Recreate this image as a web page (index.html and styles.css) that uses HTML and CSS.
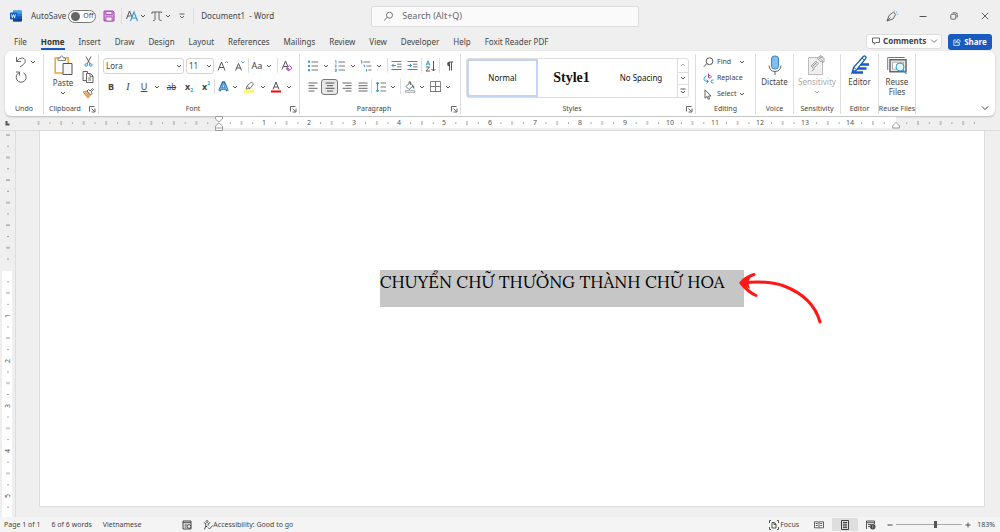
FILE: index.html
```html
<!DOCTYPE html>
<html lang="vi">
<head>
<meta charset="utf-8">
<title>Document1 - Word</title>
<link rel="stylesheet" href="styles.css">
</head>
<body>
<svg class="defs" aria-hidden="true">
  <symbol id="chev" viewBox="0 0 6 6"><path d="M1 2l2 2 2-2" fill="none" stroke="currentColor" stroke-width=".9"/></symbol>
  <symbol id="launch" viewBox="0 0 7 7"><path d="M.5 5.500V.5h5M2.500 2.500l3 3M6 2.500v3.500h-3.500" fill="none" stroke="#555" stroke-width=".9"/></symbol>
</svg>

<header class="titlebar">
  <div class="title-left">
    <svg class="word-logo" width="12" height="12" viewBox="0 0 12 12"><rect x="3" y=".5" width="9" height="11" rx="1" fill="#2b7cd3"/><path d="M3 .5h8a1 1 0 0 1 1 1v2H3z" fill="#41a5ee"/><path d="M3 6h9v2.500H3z" fill="#185abd"/><path d="M3 8.500h9v2a1 1 0 0 1-1 1H3z" fill="#103f91"/><rect y="2.500" width="7" height="7" rx=".7" fill="#185abd"/><path d="M1.500 4.300l.9 3.500 1.100-3.300 1.100 3.300.9-3.500" fill="none" stroke="#fff" stroke-width=".8"/></svg>
    <label class="autosave">AutoSave <span class="switch"><input type="checkbox"><span>Off</span></span></label>
    <button class="tool save" aria-label="Save"><svg width="12" height="12" viewBox="0 0 12 12"><path d="M1 1h9l1 1v9H1z" fill="#d99be0" stroke="#a43fb1"/><path d="M3 1.500h6v3H3z" fill="#f6e6f8" stroke="#a43fb1" stroke-width=".8"/><path d="M3 7h6v4H3z" fill="#fff" stroke="#a43fb1" stroke-width=".8"/></svg></button>
    <button class="tool ruled" aria-label="Text tools"><svg width="12" height="12" viewBox="0 0 12 12"><path d="M.5 9L3.500 1l2.500 6M1.500 6h3" fill="none" stroke="#555"/><path d="M4.500 11L8 2l3.500 9M5.800 8h4.400" fill="none" stroke="#2f9ad6" stroke-width="1.100"/></svg><svg class="chev"><use href="#chev"/></svg></button>
    <button class="tool equation" aria-label="Equation"><svg width="12" height="12" viewBox="0 0 12 12"><path d="M1 4V2h9.500v1M4 2v7.500q0 1-2 1M8 2v7.500q0 1 2.500 1" fill="none" stroke="#555" stroke-width=".9"/></svg><svg class="chev"><use href="#chev"/></svg></button>
    <button class="tool customize" aria-label="Customize toolbar"><svg width="6" height="6" viewBox="0 0 6 6"><path d="M.5 1h5M1 3l2 2 2-2" fill="none" stroke="#555" stroke-width=".9"/></svg></button>
    <span class="doc-name">Document1&nbsp; - Word</span>
  </div>
  <label class="search">
    <svg width="11" height="11" viewBox="0 0 11 11"><circle cx="6.500" cy="4.200" r="3" fill="none" stroke="#666" stroke-width=".9"/><path d="M4.300 6.300L1 9.500" stroke="#666" stroke-width=".9"/></svg>
    <input type="text" placeholder="Search (Alt+Q)" aria-label="Search">
  </label>
  <div class="title-right">
    <button aria-label="Pen"><svg width="12" height="12" viewBox="0 0 12 12"><path d="M1 11L3 5.500 7.500 2 9.500 4.500 7 9 1 11 4.500 7.500" fill="none" stroke="#555" stroke-width=".9"/><path d="M8.500 1.500l.3-1M10 2.500l1.200-1M10.800 4.200l1 .2" stroke="#2f9ad6" stroke-width=".8"/></svg></button>
    <button aria-label="Minimize"><svg width="8" height="8" viewBox="0 0 8 8"><path d="M.5 4.500h7" stroke="#555"/></svg></button>
    <button aria-label="Restore"><svg width="8" height="8" viewBox="0 0 8 8"><rect x=".8" y="2.200" width="5" height="5" rx="1" fill="none" stroke="#555" stroke-width=".9"/><path d="M2.500.8h3.200q1.500 0 1.500 1.500V5.500" fill="none" stroke="#555" stroke-width=".9"/></svg></button>
    <button aria-label="Close"><svg width="8" height="8" viewBox="0 0 8 8"><path d="M.8.8l6.400 6.400M7.200.8L.8 7.200" stroke="#555" stroke-width=".9"/></svg></button>
  </div>
</header>

<nav class="tabs">
  <a href="#">File</a><a href="#" class="active">Home</a><a href="#">Insert</a><a href="#">Draw</a><a href="#">Design</a><a href="#">Layout</a><a href="#">References</a><a href="#">Mailings</a><a href="#">Review</a><a href="#">View</a><a href="#">Developer</a><a href="#">Help</a><a href="#">Foxit Reader PDF</a>
  <div class="tab-actions">
    <button class="comments"><svg width="8" height="8" viewBox="0 0 8 8"><path d="M.5 1h7v4.500H4L2.200 7.300V5.500H.5z" fill="none" stroke="#444" stroke-width=".8"/></svg>Comments<svg width="8" height="8" viewBox="0 0 8 8" class="push"><path d="M1 2.500l3 3 3-3" fill="none" stroke="#555" stroke-width=".8"/></svg></button>
    <button class="share"><svg width="8" height="8" viewBox="0 0 8 8"><path d="M3 2H.8v5.300h5.500V5M2.500 5q.3-2.500 2.500-2.500V1l2.500 2.200L5 5.200V3.800Q3.500 3.800 2.500 5z" fill="none" stroke="#fff" stroke-width=".8"/></svg>Share</button>
  </div>
</nav>

<main class="ribbon">
  <section class="group undo">
    <div class="body">
      <div class="row"><button aria-label="Undo"><svg width="12" height="12" viewBox="0 0 12 12"><path d="M1.500 1v4.500H6M1.500 5.500Q4 1.500 7.500 2T10 6.500Q9 8.500 5 11" fill="none" stroke="#666"/></svg></button><button aria-label="Undo list"><svg class="chev"><use href="#chev"/></svg></button></div>
      <div class="row"><button aria-label="Redo"><svg width="12" height="12" viewBox="0 0 12 12"><path d="M1 1h3.500v3.500M4.500 1.500A5 5 0 1 0 8.500 1.800" fill="none" stroke="#666"/></svg></button></div>
    </div>
    <h2>Undo</h2>
  </section>

  <section class="group clipboard">
    <div class="body">
      <button class="big"><svg width="19" height="21" viewBox="0 0 19 21"><rect x="1.200" y="3" width="13" height="15" fill="#fff" stroke="#eda84d" stroke-width="1.600"/><path d="M4 5.500V3h2.200Q6.500.8 7.700.8T9.300 3h2.200v2.500z" fill="#fff" stroke="#777" stroke-width=".9"/><path d="M9 8.500h9v11H9z" fill="#f7f7f7" stroke="#555"/></svg>Paste<svg class="chev"><use href="#chev"/></svg></button>
      <div class="stack">
        <button aria-label="Cut"><svg width="9" height="11" viewBox="0 0 9 11"><path d="M2 .5l4 7.500M7 .5L3 8" stroke="#555" stroke-width=".9"/><circle cx="2.200" cy="9" r="1.300" fill="none" stroke="#2f9ad6"/><circle cx="6.800" cy="9" r="1.300" fill="none" stroke="#2f9ad6"/></svg></button>
        <button aria-label="Copy"><svg width="12" height="12" viewBox="0 0 12 12"><path d="M4 9.500H1v-9h4.500V2" fill="none" stroke="#555" stroke-width=".9"/><path d="M4.500 2.500h4l2.500 2.500v6.500H4.500zM8 2.800v2.500h3M6.200 7h3M6.200 9h3" fill="#fff" stroke="#555" stroke-width=".9"/></svg></button>
        <button aria-label="Format painter"><svg width="12" height="12" viewBox="0 0 12 12"><path d="M1 5l4-1 3.500 4L6 11z" fill="#f8b878" stroke="#e8862a" stroke-width=".9"/><path d="M2 6l4.500 4M3.500 5.500L7 9" stroke="#e8862a" stroke-width=".7"/><path d="M5 4l1.500-1.500L8 4l2.500-2.500 1 1L9 5l1 1.500L8.500 8z" fill="#fff" stroke="#555" stroke-width=".9"/></svg></button>
      </div>
    </div>
    <h2>Clipboard</h2><button class="launcher" aria-label="Clipboard pane"><svg width="7" height="7"><use href="#launch"/></svg></button>
  </section>

  <section class="group font">
    <div class="body">
      <div class="row font-top">
        <span class="combo"><select aria-label="Font name"><option>Lora</option></select><svg class="chev"><use href="#chev"/></svg></span>
        <span class="combo"><select aria-label="Font size"><option>11</option></select><svg class="chev"><use href="#chev"/></svg></span>
        <button aria-label="Grow font"><svg width="12" height="12" viewBox="0 0 12 12"><path d="M1 10.500L4.500 2 8 10.500M2.200 7.500h4.600" fill="none" stroke="#555"/><path d="M8 3l1.500-1.500L11 3" fill="none" stroke="#2f9ad6" stroke-width=".9"/></svg></button>
        <button aria-label="Shrink font"><svg width="12" height="12" viewBox="0 0 12 12"><path d="M1.500 10.500L4.500 3.500l3 7M2.500 8h4" fill="none" stroke="#555"/><path d="M7.500 1.500L9 3l1.500-1.500" fill="none" stroke="#2f9ad6" stroke-width=".9"/></svg></button>
        <button class="sep glyph">Aa</button>
        <button aria-label="Change case"><svg class="chev"><use href="#chev"/></svg></button>
        <button class="sep after" aria-label="Clear formatting"><svg width="12" height="12" viewBox="0 0 12 12"><path d="M1 9.500L4.500 1 7 7M2.200 6.500h4" fill="none" stroke="#555"/><path d="M5 8.500L8.500 5.500 11 8 7.500 11z" fill="#fff" stroke="#a43fb1" stroke-width=".9"/><path d="M6.500 7.200L9 9.800 7.500 11 5 8.500z" fill="#b85cc4"/></svg></button>
      </div>
      <div class="row font-bottom">
        <button class="glyph bold">B</button>
        <button class="glyph italic">I</button>
        <button class="glyph underline">U</button>
        <button aria-label="Underline style"><svg class="chev"><use href="#chev"/></svg></button>
        <button class="glyph strike">ab</button>
        <button class="glyph bold">x<sub>2</sub></button>
        <button class="glyph bold">x<sup>2</sup></button>
        <button class="sep" aria-label="Text effects"><svg width="11" height="11" viewBox="0 0 11 11"><path d="M1.500 10L5 1.500h1L9.500 10M3 7.500h5" fill="none" stroke="#1f6fb5" stroke-width="2.600"/><path d="M1.500 9.500L5.500 2l4 7.500M3.200 7.300h4.600" fill="none" stroke="#a8d4f5" stroke-width=".8"/></svg></button>
        <button aria-label="Text effects list"><svg class="chev"><use href="#chev"/></svg></button>
        <button aria-label="Highlight"><svg width="12" height="12" viewBox="0 0 12 12"><path d="M3 8l1-3 4.500-4 2 2L7 7.500 3 8zM4.200 5L7 7.500" fill="#fff" stroke="#666" stroke-width=".9"/><path d="M1 9.500h10v2H1z" fill="#ff0"/></svg></button>
        <button aria-label="Highlight colours"><svg class="chev"><use href="#chev"/></svg></button>
        <button aria-label="Font colour"><svg width="12" height="12" viewBox="0 0 12 12"><path d="M3 8.500L6 1l3 7.500M4 6h4" fill="none" stroke="#555"/><path d="M1 9.500h10v2H1z" fill="#f00"/></svg></button>
        <button aria-label="Font colours"><svg class="chev"><use href="#chev"/></svg></button>
      </div>
    </div>
    <h2>Font</h2><button class="launcher" aria-label="Font settings"><svg width="7" height="7"><use href="#launch"/></svg></button>
  </section>

  <section class="group paragraph">
    <div class="body">
      <div class="row para-top">
        <button aria-label="Bullets"><svg width="12" height="12" viewBox="0 0 12 12"><path d="M1 1.800h2M1 6h2M1 10.200h2" stroke="#2f9ad6" stroke-width="2"/><path d="M4.500 2H11M4.500 6H11M4.500 10H11" stroke="#777"/></svg></button>
        <button aria-label="Bullet styles"><svg class="chev"><use href="#chev"/></svg></button>
        <button aria-label="Numbering"><svg width="12" height="12" viewBox="0 0 12 12"><path d="M1 1l1-.3v3M.8 5h1.700L1 7h1.500M.8 9h1.500v2.500H.8M1 10.200h1.200" fill="none" stroke="#2f9ad6" stroke-width=".8"/><path d="M4.500 2H11M4.500 6H11M4.500 10H11" stroke="#777"/></svg></button>
        <button aria-label="Number styles"><svg class="chev"><use href="#chev"/></svg></button>
        <button aria-label="Multilevel list"><svg width="12" height="12" viewBox="0 0 12 12"><path d="M.8 1l1-.3v3M3.500 5.300h1.200v2M6.500 9v2.500" fill="none" stroke="#2f9ad6"/><path d="M3.500 2H10M6.500 6H11.500M8.500 10h3" stroke="#777"/></svg></button>
        <button aria-label="List styles"><svg class="chev"><use href="#chev"/></svg></button>
        <button class="sep after" aria-label="Decrease indent"><svg width="11" height="11" viewBox="0 0 11 11"><path d="M.5 1.500h10M6 4.200h4.500M6 6.800h4.500M.5 9.500h10" stroke="#777"/><path d="M5 5.500H1M2.700 3.800L1 5.500l1.700 1.700" fill="none" stroke="#2f9ad6"/></svg></button>
        <button aria-label="Increase indent"><svg width="11" height="11" viewBox="0 0 11 11"><path d="M.5 1.500h10M6 4.200h4.500M6 6.800h4.500M.5 9.500h10" stroke="#777"/><path d="M.5 5.500h4M2.800 3.800l1.700 1.700-1.700 1.700" fill="none" stroke="#2f9ad6"/></svg></button>
        <button class="sep" aria-label="Sort"><svg width="12" height="12" viewBox="0 0 12 12"><path d="M1 5.500L3 .8l2 4.700M1.800 4h2.500" fill="none" stroke="#2f9ad6"/><path d="M1 7h3.500L1 11h4M8.500 1v10M6.500 9l2 2 2-2" fill="none" stroke="#555"/></svg></button>
        <button class="sep" aria-label="Show marks"><svg width="8" height="10" viewBox="0 0 8 10"><path d="M4.500 5.500a2.300 2.300 0 0 1 0-4.800z" fill="#555"/><path d="M4.500 9.500V1M6.500 9.500V1M4 1h4" fill="none" stroke="#555"/></svg></button>
      </div>
      <div class="row para-bottom">
        <button aria-label="Align left"><svg width="10" height="10" viewBox="0 0 10 10"><path d="M.5 1h9M.5 3.700h6M.5 6.300h9M.5 9h6" stroke="#666"/></svg></button>
        <button class="pressed" aria-label="Centre"><svg width="10" height="10" viewBox="0 0 10 10"><path d="M.5 1h9M2 3.700h6M.5 6.300h9M2 9h6" stroke="#555"/></svg></button>
        <button aria-label="Align right"><svg width="10" height="10" viewBox="0 0 10 10"><path d="M.5 1h9M3.500 3.700h6M.5 6.300h9M3.500 9h6" stroke="#666"/></svg></button>
        <button aria-label="Justify"><svg width="10" height="10" viewBox="0 0 10 10"><path d="M.5 1h9M.5 3.700h9M.5 6.300h9M.5 9h9" stroke="#666"/></svg></button>
        <button class="sep" aria-label="Line spacing"><svg width="12" height="12" viewBox="0 0 12 12"><path d="M2.500 1v10M1 3l1.500-2L4 3M1 9l1.500 2L4 9" fill="none" stroke="#2f9ad6"/><path d="M5.500 2H11M5.500 6H11M5.500 10H11" stroke="#777"/></svg></button>
        <button aria-label="Line spacing list"><svg class="chev"><use href="#chev"/></svg></button>
        <button class="sep after" aria-label="Shading"><svg width="12" height="12" viewBox="0 0 12 12"><path d="M2 5.500L6 1.500 9 5 5 8.500zM5 2.500V.8h1.500V4" fill="#fff" stroke="#666" stroke-width=".9"/><path d="M8 3.500q2.500 1 2.500 4Q8.500 8 8 3.500z" fill="#2f7fc0"/><path d="M1.500 9.700h9.500v1.600H1.500z" fill="#fff" stroke="#888" stroke-width=".7"/></svg></button>
        <button aria-label="Shading colours"><svg class="chev"><use href="#chev"/></svg></button>
        <button aria-label="Borders"><svg width="11" height="11" viewBox="0 0 11 11"><path d="M.5.5h10v10H.500z" fill="none" stroke="#888"/><path d="M5.500 0v11M0 5.500h11M0 10.500h11" stroke="#777"/></svg></button>
        <button aria-label="Border styles"><svg class="chev"><use href="#chev"/></svg></button>
      </div>
    </div>
    <h2>Paragraph</h2><button class="launcher" aria-label="Paragraph settings"><svg width="7" height="7"><use href="#launch"/></svg></button>
  </section>

  <section class="group styles">
    <div class="body">
      <div class="gallery">
        <button class="style selected">Normal</button>
        <button class="style heading">Style1</button>
        <button class="style">No Spacing</button>
        <div class="scroller">
          <button class="dim" aria-label="Previous"><svg width="6" height="6" viewBox="0 0 6 6"><path d="M1 4l2-2 2 2" fill="none" stroke="currentColor" stroke-width=".9"/></svg></button>
          <button aria-label="Next"><svg class="chev"><use href="#chev"/></svg></button>
          <button aria-label="More styles"><svg width="6" height="6" viewBox="0 0 6 6"><path d="M.5 1h5M1 3l2 2 2-2" fill="none" stroke="#444" stroke-width=".9"/></svg></button>
        </div>
      </div>
    </div>
    <h2>Styles</h2><button class="launcher" aria-label="Styles pane"><svg width="7" height="7"><use href="#launch"/></svg></button>
  </section>

  <section class="group editing">
    <div class="body">
      <button><svg width="11" height="11" viewBox="0 0 11 11"><circle cx="6.500" cy="4.200" r="3.400" fill="none" stroke="#555"/><path d="M4 6.500L.8 9.800" stroke="#555"/></svg>Find<svg class="chev far"><use href="#chev"/></svg></button>
      <button><svg width="11" height="11" viewBox="0 0 11 11"><path d="M5.500.5v4M5.500 3.500a1.300 1.300 0 1 1 0 .4" fill="none" stroke="#a43fb1"/><path d="M3.500 3Q.8 3.500 1 6.500q.5 2 4 2M3.500 6.800l2 1.700-2 1.800M10.500 7q-2.500-.5-2.500 1.500t2.500 1.500" fill="none" stroke="#2f9ad6"/></svg>Replace</button>
      <button><svg width="11" height="11" viewBox="0 0 11 11"><path d="M2 .8v8.400l2-1.800 1.300 3L6.700 9.800 5.400 7H8z" fill="#fff" stroke="#555" stroke-width=".9"/></svg>Select<svg class="chev"><use href="#chev"/></svg></button>
    </div>
    <h2>Editing</h2>
  </section>

  <section class="group voice">
    <div class="body">
      <button class="big"><svg width="14" height="20" viewBox="0 0 14 20"><rect x="3.500" y="1" width="7" height="13" rx="3" fill="#83bdec" stroke="#3a86c4"/><path d="M1 10.500q.5 6 6 6t6-6M7 16.500V20" fill="none" stroke="#666"/></svg>Dictate</button>
    </div>
    <h2>Voice</h2>
  </section>

  <section class="group sensitivity">
    <div class="body">
      <button class="big dim" disabled><svg width="18" height="20" viewBox="0 0 18 20"><path d="M.5 2.500h14v17H.5z" fill="#efefef" stroke="#bbb"/><path d="M3 11l5-5 2.500 2.500-5 5zM9 3l4-2.500L16.500 4 13 7z" fill="#ddd" stroke="#aaa"/><path d="M4.500 11.500L8.500 7.500M11 3.500l4-2M14 8l3-2.500M3.500 16l3-2" stroke="#999"/></svg>Sensitivity<svg class="chev"><use href="#chev"/></svg></button>
    </div>
    <h2>Sensitivity</h2>
  </section>

  <section class="group editor">
    <div class="body">
      <button class="big"><svg width="20" height="20" viewBox="0 0 20 20"><path d="M9 9.500h10M7 13.500h9.500M3 17.500h10" stroke="#185abd" stroke-width="2.400"/><path d="M2 18l1.500-5.500L13.500 1.300q1-.8 2 .1t.3 2L6.500 15z" fill="#fff" stroke="#185abd" stroke-width="1.300"/><path d="M12 3l2.300 2M4 12.500l2.500 2.200M2.500 18l.8-3 1.700 1.500z" fill="none" stroke="#185abd"/></svg>Editor</button>
    </div>
    <h2>Editor</h2>
  </section>

  <section class="group reuse">
    <div class="body">
      <button class="big"><svg width="20" height="20" viewBox="0 0 20 20"><path d="M.7 15V2.500h17" fill="none" stroke="#777"/><path d="M3 4.700h16v12H3z" fill="#eee" stroke="#666" stroke-width="1.500"/><path d="M5.500 7.200h11v7h-11z" fill="#fff" stroke="#999" stroke-width=".8"/><circle cx="13" cy="12" r="4" fill="#e8f4fc" stroke="#2f9ad6"/><path d="M16 15l3.500 3.800" stroke="#2f9ad6" stroke-width="1.200"/></svg><span>Reuse<br>Files</span></button>
    </div>
    <h2>Reuse Files</h2>
  </section>
  <button class="collapse" aria-label="Collapse ribbon"><svg width="8" height="8" viewBox="0 0 8 8"><path d="M1 2.500l3 3 3-3" fill="none" stroke="#444"/></svg></button>
</main>

<div class="ruler">
  <svg class="h-ruler" height="16" aria-hidden="true">
    <defs>
      <pattern id="hp" x="219" y="0" width="45.100" height="16" patternUnits="userSpaceOnUse"><path d="M11.300 6v2M33.800 6v2" stroke="#aaa"/><path d="M22.500 5v4" stroke="#999"/></pattern>
      <pattern id="hm" x="216" y="0" width="22.550" height="16" patternUnits="userSpaceOnUse"><path d="M3 5v4" stroke="#999"/><path d="M14.300 6v2" stroke="#aaa"/></pattern>
    </defs>
    <rect x="36" width="180" height="16" fill="url(#hm)"/>
    <rect x="219" y="1" width="677" height="11" fill="#fff"/>
    <rect x="219" width="677" height="16" fill="url(#hp)"/>
    <rect x="902" width="77" height="16" fill="url(#hm)"/>
    <path d="M6.500 5v3.500h3" stroke="#555" stroke-width="2" fill="none"/>
    <g class="nums">
      <text x="264" y="9">1</text><text x="309" y="9">2</text><text x="354" y="9">3</text><text x="399" y="9">4</text><text x="444" y="9">5</text><text x="490" y="9">6</text><text x="535" y="9">7</text><text x="580" y="9">8</text><text x="625" y="9">9</text><text x="670" y="9">10</text><text x="715" y="9">11</text><text x="760" y="9">12</text><text x="805" y="9">13</text><text x="850" y="9">14</text>
    </g>
    <path d="M215.500.5h7v2.500l-3.500 3-3.500-3zM215.500 14.500V10l3.500-3 3.500 3v4.500zM215.500 12h7M892.500 12V10L896 6.500l3.500 3.500v2z" fill="#fff" stroke="#888" stroke-width=".8"/>
  </svg>
</div>

<div class="workspace">
  <svg class="v-ruler" width="15" height="386" aria-hidden="true">
    <defs>
      <pattern id="vp" x="0" y="139.500" width="15" height="45.100" patternUnits="userSpaceOnUse"><path d="M7 11.300h2M7 33.800h2" stroke="#aaa"/><path d="M6 22.500h4" stroke="#999"/></pattern>
      <pattern id="vm" x="0" y="1" width="15" height="22.550" patternUnits="userSpaceOnUse"><path d="M6 3h4" stroke="#888"/><path d="M7 14.300h2" stroke="#999"/></pattern>
    </defs>
    <rect y="1" width="15" height="134" fill="url(#vm)"/>
    <rect x="2" y="140" width="10" height="246" fill="#fff"/>
    <rect y="140" width="15" height="246" fill="url(#vp)"/>
    <g class="nums">
      <text transform="translate(10 185) rotate(-90)">1</text><text transform="translate(10 230) rotate(-90)">2</text><text transform="translate(10 275) rotate(-90)">3</text><text transform="translate(10 320) rotate(-90)">4</text><text transform="translate(10 365) rotate(-90)">5</text>
    </g>
  </svg>
  <article class="paper">
    <p class="selection">CHUYỂN CHỮ THƯỜNG THÀNH CHỮ HOA
      <svg class="arrow" width="88" height="56" viewBox="0 0 88 56" aria-hidden="true"><path d="M16 4.500Q7 7.500 3 13Q10 22 18 25.500M4 13Q30 10 46 16Q75 27 82 52" fill="none" stroke="#ff1616" stroke-width="3" stroke-linecap="round" stroke-linejoin="round"/><path d="M1 12.500L13 7l-3 5 2 7z" fill="#ff1616"/></svg>
    </p>
  </article>
</div>

<footer class="status">
  <span>Page 1 of 1</span><span>6 of 6 words</span><span class="lang">Vietnamese</span>
  <button aria-label="Macro recording"><svg width="10" height="10" viewBox="0 0 10 10"><path d="M1 1h8v8H1zM1 2.700h8M2.500 5h3M2.500 7h2" fill="none" stroke="#444"/><circle cx="7" cy="6.500" r="1.800" fill="#fff" stroke="#444"/></svg></button>
  <button class="access"><svg width="10" height="10" viewBox="0 0 10 10"><circle cx="4" cy="1.500" r="1" fill="none" stroke="#444" stroke-width=".8"/><path d="M.8 2.500l2 1.200V6L1.500 9.500M7.200 2.500l-2 1.200V5.500M2.800 6.500h1.500M5 7.500l1.500 1.500 3-3.500" fill="none" stroke="#444" stroke-width=".9"/></svg>Accessibility: Good to go</button>
  <div class="views">
    <button class="focus"><svg width="10" height="10" viewBox="0 0 10 10"><path d="M2 .5H.5V3M8 .5h1.500V3M2 9.500H.5V7M8 9.500h1.500V7M3 2.500h2.500L7 4v4H3zM5 2.500V4.500h2" fill="none" stroke="#444" stroke-width=".9"/></svg>Focus</button>
    <button class="view" aria-label="Read mode"><svg width="10" height="8" viewBox="0 0 10 8"><path d="M.5.8h4l.5.5.5-.5h4v6h-4l-.5.5-.5-.5h-4zM5 1v6M1.800 2.500h2M1.800 4.500h2M6.200 2.500h2M6.200 4.500h2" fill="none" stroke="#555" stroke-width=".9"/></svg></button>
    <button class="view current" aria-label="Print layout"><svg width="8" height="10" viewBox="0 0 8 10"><path d="M.5.5h7v9h-7zM2 2.500h4M2 4.200h4M2 5.900h4M2 7.600h4" fill="none" stroke="#444"/></svg></button>
    <button class="view" aria-label="Web layout"><svg width="10" height="10" viewBox="0 0 10 10"><path d="M.5 9V1h8v3M.5 2.700h8M2 4.500h3M2 6.500h2" fill="none" stroke="#555"/><circle cx="6.800" cy="6.800" r="2.700" fill="#444"/><path d="M6.800 5v3.500" stroke="#ccc" stroke-width=".7"/></svg></button>
    <button class="step" aria-label="Zoom out"><svg width="6" height="6" viewBox="0 0 6 6"><path d="M.5 3h5" stroke="#444"/></svg></button>
    <input class="zoom" type="range" min="0" max="100" value="60" aria-label="Zoom">
    <button class="step" aria-label="Zoom in"><svg width="6" height="6" viewBox="0 0 6 6"><path d="M.5 3h5M3 .5v5" stroke="#444" stroke-width=".9"/></svg></button>
    <span class="percent">183%</span>
  </div>
</footer>
</body>
</html>
```
FILE: styles.css
```css
* { box-sizing: border-box; }
body {
  margin: 0;
  height: 100vh;
  display: flex;
  flex-direction: column;
  overflow: hidden;
  background: #efefef;
  color: #444;
  font: 8px/10px "Noto Sans", "Open Sans", sans-serif;
}
button, input, select { font: inherit; color: inherit; margin: 0; }
button {
  border: 0;
  padding: 0;
  background: none;
  display: flex;
  align-items: center;
  justify-content: center;
}
svg { display: block; flex: none; }
.defs { position: absolute; width: 0; height: 0; }
.chev { width: 6px; height: 6px; }

/* title bar */
.titlebar {
  display: grid;
  grid-template-columns: 1fr 27% 1fr;
  align-items: center;
  padding-left: 10px;
  height: 32px;
}
.title-left { display: flex; align-items: center; }
.word-logo { margin-right: 9px; }
.autosave { display: flex; align-items: center; gap: 2px; }
.switch {
  display: flex;
  align-items: center;
  gap: 3px;
  width: 28px;
  height: 13px;
  padding-left: 2px;
  border: 1px solid #777;
  border-radius: 7px;
  background: #fff;
  font-size: 7px;
}
.switch input {
  appearance: none;
  width: 9px;
  height: 9px;
  border-radius: 50%;
  background: #666;
}
.tool { gap: 2px; height: 16px; padding: 0 4px; }
.tool.save { padding: 0 6px 0 7px; }
.tool.ruled { border-left: 1px solid #ddd; }
.tool.equation { padding-left: 1px; }
.tool.customize { padding: 0 8px 0 4px; border-right: 1px solid #ddd; }
.doc-name { padding-left: 7px; white-space: nowrap; }
.search {
  display: flex;
  align-items: center;
  gap: 8px;
  height: 21px;
  padding-left: 11px;
  border: 1px solid #dcdcdc;
  border-radius: 2px;
  background: #fafafa;
}
.search input {
  flex: 1;
  min-width: 0;
  border: 0;
  padding: 0;
  background: none;
  outline: 0;
  font-size: 9px;
}
.search input::placeholder { color: #666; }
.title-right { display: flex; justify-content: flex-end; }
.title-right button { width: 31px; height: 20px; }

/* tabs */
.tabs { display: flex; align-items: center; height: 19px; padding: 0 8px 0 14px; gap: 14px; }
.tabs a { color: #444; text-decoration: none; white-space: nowrap; height: 17px; line-height: 18px; }
.tabs a.active { font-weight: 700; border-bottom: 2px solid #185abd; color: #333; }
.tab-actions { display: flex; gap: 6px; margin-left: auto; font-weight: 700; }
.comments { gap: 3px; width: 76px; height: 15px; padding: 0 3px 0 5px; border: 1px solid #ddd; border-radius: 3px; background: #fff; font-weight: 700; }
.push { margin-left: auto; }
.share { gap: 3px; width: 44px; height: 16px; border-radius: 3px; background: #185abd; color: #fff; font-weight: 700; }

/* ribbon */
.ribbon {
  display: flex;
  margin: 0 5px;
  padding: 3px 0 2px;
  height: 65px;
  border-radius: 6px;
  background: #fff;
  box-shadow: 0 1px 2px #b8b8b8;
}
.group {
  display: grid;
  grid-template-columns: 1fr auto;
  grid-template-rows: 1fr 10px;
  border-right: 1px solid #ddd;
  flex: none;
}
.group .body { grid-column: 1 / -1; min-width: 0; min-height: 0; }
.group h2 {
  margin: 0;
  font-size: 7px;
  line-height: 10px;
  font-weight: 400;
  text-align: center;
  white-space: nowrap;
  justify-self: center;
}
.launcher { width: 12px; }
.row { display: grid; align-items: center; height: 17px; }
.sep { border-left: 1px solid #ddd; height: 15px; }
.after { margin-left: 4px; }
.glyph { font-size: 9px; line-height: 12px; }
.bold { font-weight: 700; }
.italic { font-style: italic; font-family: "Liberation Serif", serif; font-size: 10px; }
.underline { text-decoration: underline; }
.strike { text-decoration: line-through; font-size: 8px; }
.glyph sub, .glyph sup { font-size: 5px; line-height: 5px; color: #2f9ad6; }
.glyph sub { align-self: flex-end; }
.glyph sup { align-self: flex-start; }
.big { flex-direction: column; justify-content: flex-start; gap: 2px; width: 100%; line-height: 10px; }
.dim { color: #aaa; }

.undo { width: 39px; }
.undo .row { grid-template-columns: 16px 8px; height: 15px; padding-left: 8px; justify-content: start; }
.clipboard { width: 55px; }
.clipboard .body { display: grid; grid-template-columns: 38px 10px; padding-top: 1px; }
.stack { display: grid; grid-template-rows: 13px 18px 14px; justify-items: center; }
.font { width: 201px; }
.font .body, .paragraph .body { display: grid; align-content: start; gap: 4px; padding: 3px 0 0 4px; }
.font-top { grid-template-columns: 83px 28px 18px 16px 17px 8px 22px; }
.font-bottom { grid-template-columns: 16px 18px 14px 12px 17px 18px 16px 17px 8px 20px 8px 18px 8px; }
.combo {
  display: flex;
  align-items: center;
  height: 16px;
  padding: 0 1px 0 2px;
  border: 1px solid #d4d4d4;
  border-radius: 3px;
}
.combo:first-child { margin-right: 2px; }
.combo select { appearance: none; flex: 1; min-width: 0; border: 0; padding: 0; background: none; }
.paragraph { width: 161px; }
.para-top { grid-template-columns: 18px 8px 19px 7px 19px 8px 21px 17px 18px 18px; }
.para-bottom { grid-template-columns: 17px 17px 17px 16px 18px 7px 22px 8px 18px 8px; }
.font-top, .font-bottom, .para-top, .para-bottom { justify-content: start; }
.pressed { height: 16px; border: 1px solid #777; border-radius: 3px; background: #e8e8e8; }
.styles { width: 235px; }
.styles .body { padding: 4px 6px 0 5px; }
.gallery { display: grid; grid-template-columns: 71px 67px 1fr 11px; height: 40px; border: 1px solid #ddd; border-radius: 3px; }
.style { color: #111; white-space: nowrap; }
.selected { border: 2px solid #c3d5f2; height: 38px; }
.heading { font: 700 14px/18px "Liberation Serif", serif; }
.scroller { display: grid; grid-template-rows: repeat(3, 1fr); border-left: 1px solid #ddd; }
.scroller button + button { border-top: 1px solid #ddd; }
.editing { width: 60px; }
.editing .body { display: grid; grid-auto-rows: 16px; align-content: start; padding-left: 7px; }
.editing button { justify-content: flex-start; gap: 3px; font-size: 7px; }
.far { margin-left: 5px; }
.voice { width: 38px; }
.sensitivity { width: 47px; }
.editor { width: 38px; }
.reuse { width: 37px; }
.voice .body, .sensitivity .body, .editor .body, .reuse .body { padding-top: 1px; }
.voice h2, .sensitivity h2, .editor h2, .reuse h2, .undo h2, .editing h2 { grid-column: 1 / -1; }
.collapse { margin-left: auto; align-self: flex-end; padding: 0 6px 2px 0; }

/* rulers and page */
.ruler { flex: none; height: 15px; border-bottom: 1px solid #ddd; }
.h-ruler { width: 100%; }
.nums { font-size: 7px; text-anchor: middle; fill: #555; }
.workspace { flex: 1; display: flex; min-height: 0; overflow: hidden; }
.v-ruler { margin-right: 24px; box-shadow: 1px 0 #ddd; }
.paper {
  flex: 1;
  display: flex;
  justify-content: center;
  align-items: flex-start;
  margin: 0 15px 10px 0;
  padding: 139px 90px 0 190px;
  border: 1px solid #ddd;
  border-top: 0;
  background: #fff;
}
.selection {
  position: relative;
  margin: 0;
  height: 37px;
  padding-right: 20px;
  background: #c6c6c6;
  color: #000;
  font: 17px/24px Lora, "Liberation Serif", serif;
  white-space: nowrap;
}
.arrow { position: absolute; right: -82px; top: 0; }

/* status bar */
.status {
  flex: none;
  display: flex;
  align-items: center;
  height: 15px;
  padding: 0 5px 0 4px;
  gap: 11px;
  background: #f4f4f4;
  font-size: 7px;
  white-space: nowrap;
}
.lang { margin-right: 30px; }
.access { gap: 0; }
.views { display: flex; align-items: center; margin-left: auto; height: 13px; }
.focus { gap: 1px; margin-right: 7px; }
.view { width: 26px; height: 13px; }
.current { background: #dedede; }
.step { width: 12px; }
.zoom { appearance: none; width: 66px; height: 9px; background: linear-gradient(#aaa, #aaa) center / 100% 1px no-repeat; }
.zoom::-webkit-slider-thumb { appearance: none; width: 3px; height: 7px; background: #555; }
.percent { padding-left: 3px; }
```
